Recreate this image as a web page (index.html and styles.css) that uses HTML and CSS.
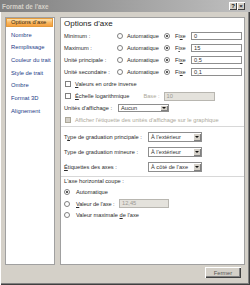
FILE: index.html
```html
<!DOCTYPE html>
<html lang="fr">
<head>
  <meta charset="UTF-8" />
  <title>Format de l'axe</title>
  <link rel="stylesheet" href="styles.css">
</head>
<body>
  <div class="window">
    <div class="titlebar">
      <span class="title">Format de l'axe</span>
      <div class="tbtns">
        <span class="tbtn">?</span>
        <span class="tbtn">×</span>
      </div>
    </div>

    <div class="main">
      <!-- Liste des catégories -->
      <ul class="nav">
        <li class="active">Options d'axe</li>
        <li>Nombre</li>
        <li>Remplissage</li>
        <li>Couleur du trait</li>
        <li>Style de trait</li>
        <li>Ombre</li>
        <li>Format 3D</li>
        <li>Alignement</li>
      </ul>

      <div class="pane">
        <div class="heading">Options d'axe</div>

        <div class="axis-row">
          <span>Minimum :</span>
          <span class="radio"></span>
          <span>Automatique</span>
          <span class="radio on"></span>
          <span>Fi<u>x</u>e</span>
          <span class="field">0</span>
        </div>
        <div class="axis-row">
          <span>Maximum :</span>
          <span class="radio"></span>
          <span>Automatique</span>
          <span class="radio on"></span>
          <span>F<u>i</u>xe</span>
          <span class="field">15</span>
        </div>
        <div class="axis-row">
          <span>Unité principale :</span>
          <span class="radio"></span>
          <span>Automatique</span>
          <span class="radio on"></span>
          <span>Fi<u>x</u>e</span>
          <span class="field">0,5</span>
        </div>
        <div class="axis-row">
          <span>Unité secondaire :</span>
          <span class="radio"></span>
          <span>Automatique</span>
          <span class="radio on"></span>
          <span>Fi<u>x</u>e</span>
          <span class="field">0,1</span>
        </div>

        <div class="row">
          <span class="check"></span>
          <span><u>V</u>aleurs en ordre inverse</span>
        </div>
        <div class="row">
          <span class="check"></span>
          <span><u>É</u>chelle logarithmique</span>
          <span class="muted base-label">Base :</span>
          <span class="field off base">10</span>
        </div>
        <div class="row display-row">
          <span class="display-label">Unités d'affichage :</span>
          <span class="select small">Aucun<span class="drop"></span></span>
        </div>
        <div class="row muted">
          <span class="check off"></span>
          <span>Afficher l'étiquette des unités d'affichage sur le graphique</span>
        </div>

        <div class="sep"></div>

        <div class="grad-row">
          <span>T<u>y</u>pe de graduation principale :</span>
          <span class="select">À l'extérieur<span class="drop"></span></span>
        </div>
        <div class="grad-row">
          <span>Type de graduation mineure :</span>
          <span class="select">À l'extérieur<span class="drop"></span></span>
        </div>
        <div class="grad-row">
          <span><u>É</u>tiquettes des axes :</span>
          <span class="select">À côté de l'axe<span class="drop"></span></span>
        </div>

        <div class="sep second"></div>

        <div class="cross-title">L'axe horizontal coupe :</div>
        <div class="opt">
          <span class="radio on"></span>
          <span>Automatique</span>
        </div>
        <div class="opt value">
          <span class="radio"></span>
          <span class="value-label"><u>V</u>aleur de l'axe :</span>
          <span class="field off">12,45</span>
        </div>
        <div class="opt">
          <span class="radio"></span>
          <span>Valeur maximale <u>d</u>e l'axe</span>
        </div>
      </div>
    </div>

    <div class="footer">
      <button class="btn">Fermer</button>
    </div>
  </div>
</body>
</html>
```

FILE: styles.css
```css
* {
  margin: 0;
  padding: 0;
  box-sizing: border-box;
}

body {
  width: 250px;
  height: 285px;
  overflow: hidden;
  font-family: "Liberation Sans", Arial, sans-serif;
  font-size: 5.7px;
  color: #2b2b2b;
}

.window {
  width: 250px;
  height: 285px;
  background: #d4d0c8;
  display: flex;
  flex-direction: column;
  box-shadow: inset 1px 1px #ffffff, inset -1px -1px #404040, inset -2px -2px #808080;
}

/* barre de titre */
.titlebar {
  height: 12px;
  display: flex;
  align-items: center;
  justify-content: space-between;
  padding: 0 5px 0 2px;
  background: linear-gradient(90deg, #808080, #c0c0c0);
}

.title {
  font-size: 6.4px;
  font-weight: bold;
  color: #d4d0c8;
}

.tbtns {
  display: flex;
}

.tbtn {
  width: 8px;
  height: 8px;
  display: flex;
  align-items: center;
  justify-content: center;
  background: #d4d0c8;
  font-size: 6px;
  font-weight: bold;
  color: #111;
  box-shadow: inset 1px 1px #fff, inset -1px -1px #404040;
}

.main {
  display: flex;
  gap: 5px;
  padding: 5px 5px 0 5px;
}

.nav {
  list-style: none;
  width: 50px;
  height: 248px;
  background: #fff;
  border: 1px solid #a0a0a0;
  display: flex;
  flex-direction: column;
  gap: 3.7px;
  padding-right: 1px;
}

.nav li {
  height: 9px;
  line-height: 9px;
  padding-left: 5px;
  font-size: 5.8px;
  color: #233a86;
  white-space: nowrap;
}

.nav li.active {
  color: #3a2a12;
  background: linear-gradient(#fde3b0, #f8b45c 55%, #f5a040);
  border: 1px solid #e39a3c;
  line-height: 7px;
  padding-left: 4px;
}

.pane {
  width: 185px;
  height: 248px;
  background: #fff;
  border: 1px solid #a0a0a0;
  padding-left: 3px;
  padding-right: 2px;
}

.heading {
  height: 12px;
  line-height: 12px;
  font-size: 8px;
  color: #222;
}

.axis-row {
  height: 12px;
  display: grid;
  grid-template-columns: 53px 10px 37px 11px 16px 51px;
  align-items: center;
}

.row {
  height: 12px;
  display: flex;
  align-items: center;
  gap: 4px;
  padding-left: 1px;
  white-space: nowrap;
}

.display-row {
  gap: 0;
  padding-left: 0;
}

.display-label {
  width: 54px;
}

.muted {
  color: #aca899;
}

.radio {
  width: 6px;
  height: 6px;
  border-radius: 50%;
  border: 1px solid #808080;
  background: #fff;
  display: flex;
  align-items: center;
  justify-content: center;
  flex: none;
}

.radio.on::after {
  content: "";
  width: 2px;
  height: 2px;
  border-radius: 50%;
  background: #222;
}

.check {
  width: 6px;
  height: 6px;
  border: 1px solid #808080;
  background: #fff;
  flex: none;
}

.check.off {
  background: #d4d0c8;
  border-color: #aca899;
}

.field {
  height: 8px;
  line-height: 6px;
  padding-left: 2px;
  border: 1px solid #8e8e8e;
  background: #fff;
  color: #333;
}

.field.off {
  background: #e4e2dc;
  color: #9c9a94;
  border-color: #b8b6b0;
}

.base-label {
  margin-left: 10px;
}

.base {
  width: 51px;
  height: 9px;
  line-height: 7px;
}

.select {
  position: relative;
  width: 54px;
  height: 10px;
  line-height: 8px;
  padding-left: 2px;
  border: 1px solid #8e8e8e;
  background: #fff;
  color: #333;
}

.select.small {
  width: 51px;
  height: 8px;
  line-height: 6px;
}

.drop {
  position: absolute;
  top: 0;
  right: 0;
  width: 8px;
  height: 100%;
  background: #d4d0c8;
  box-shadow: inset 1px 1px #fff, inset -1px -1px #808080;
}

.drop::after {
  content: "";
  position: absolute;
  left: 2px;
  top: 50%;
  margin-top: -1px;
  border-left: 2px solid transparent;
  border-right: 2px solid transparent;
  border-top: 2px solid #111;
}

.sep {
  height: 1px;
  background: #d8d8d8;
  margin: 0 0 2px -3px;
  width: 183px;
}

.sep.second {
  margin-top: 4px;
  margin-bottom: 0;
}

.grad-row {
  height: 10px;
  margin-top: 5px;
  display: grid;
  grid-template-columns: 84px 54px;
  align-items: center;
}

.grad-row:first-of-type {
  margin-top: 0;
}

.cross-title {
  height: 7px;
  line-height: 7px;
  margin-top: 1px;
}

.opt {
  height: 8px;
  display: flex;
  align-items: center;
  gap: 6px;
  margin-top: 3px;
  white-space: nowrap;
}

.opt.value {
  height: 9px;
}

.value-label {
  width: 39px;
  margin-right: -2px;
  letter-spacing: -0.1px;
}

.opt .field {
  width: 50px;
  height: 9px;
  line-height: 7px;
}

.footer {
  display: flex;
  justify-content: flex-end;
  padding: 2px 9px 0 0;
}

.btn {
  width: 36px;
  height: 11px;
  font-family: "Liberation Sans", Arial, sans-serif;
  font-size: 5.7px;
  color: #555;
  background: #d4d0c8;
  border: none;
  box-shadow: inset 1px 1px #fff, inset -1px -1px #404040, inset -2px -2px #808080;
}
```
